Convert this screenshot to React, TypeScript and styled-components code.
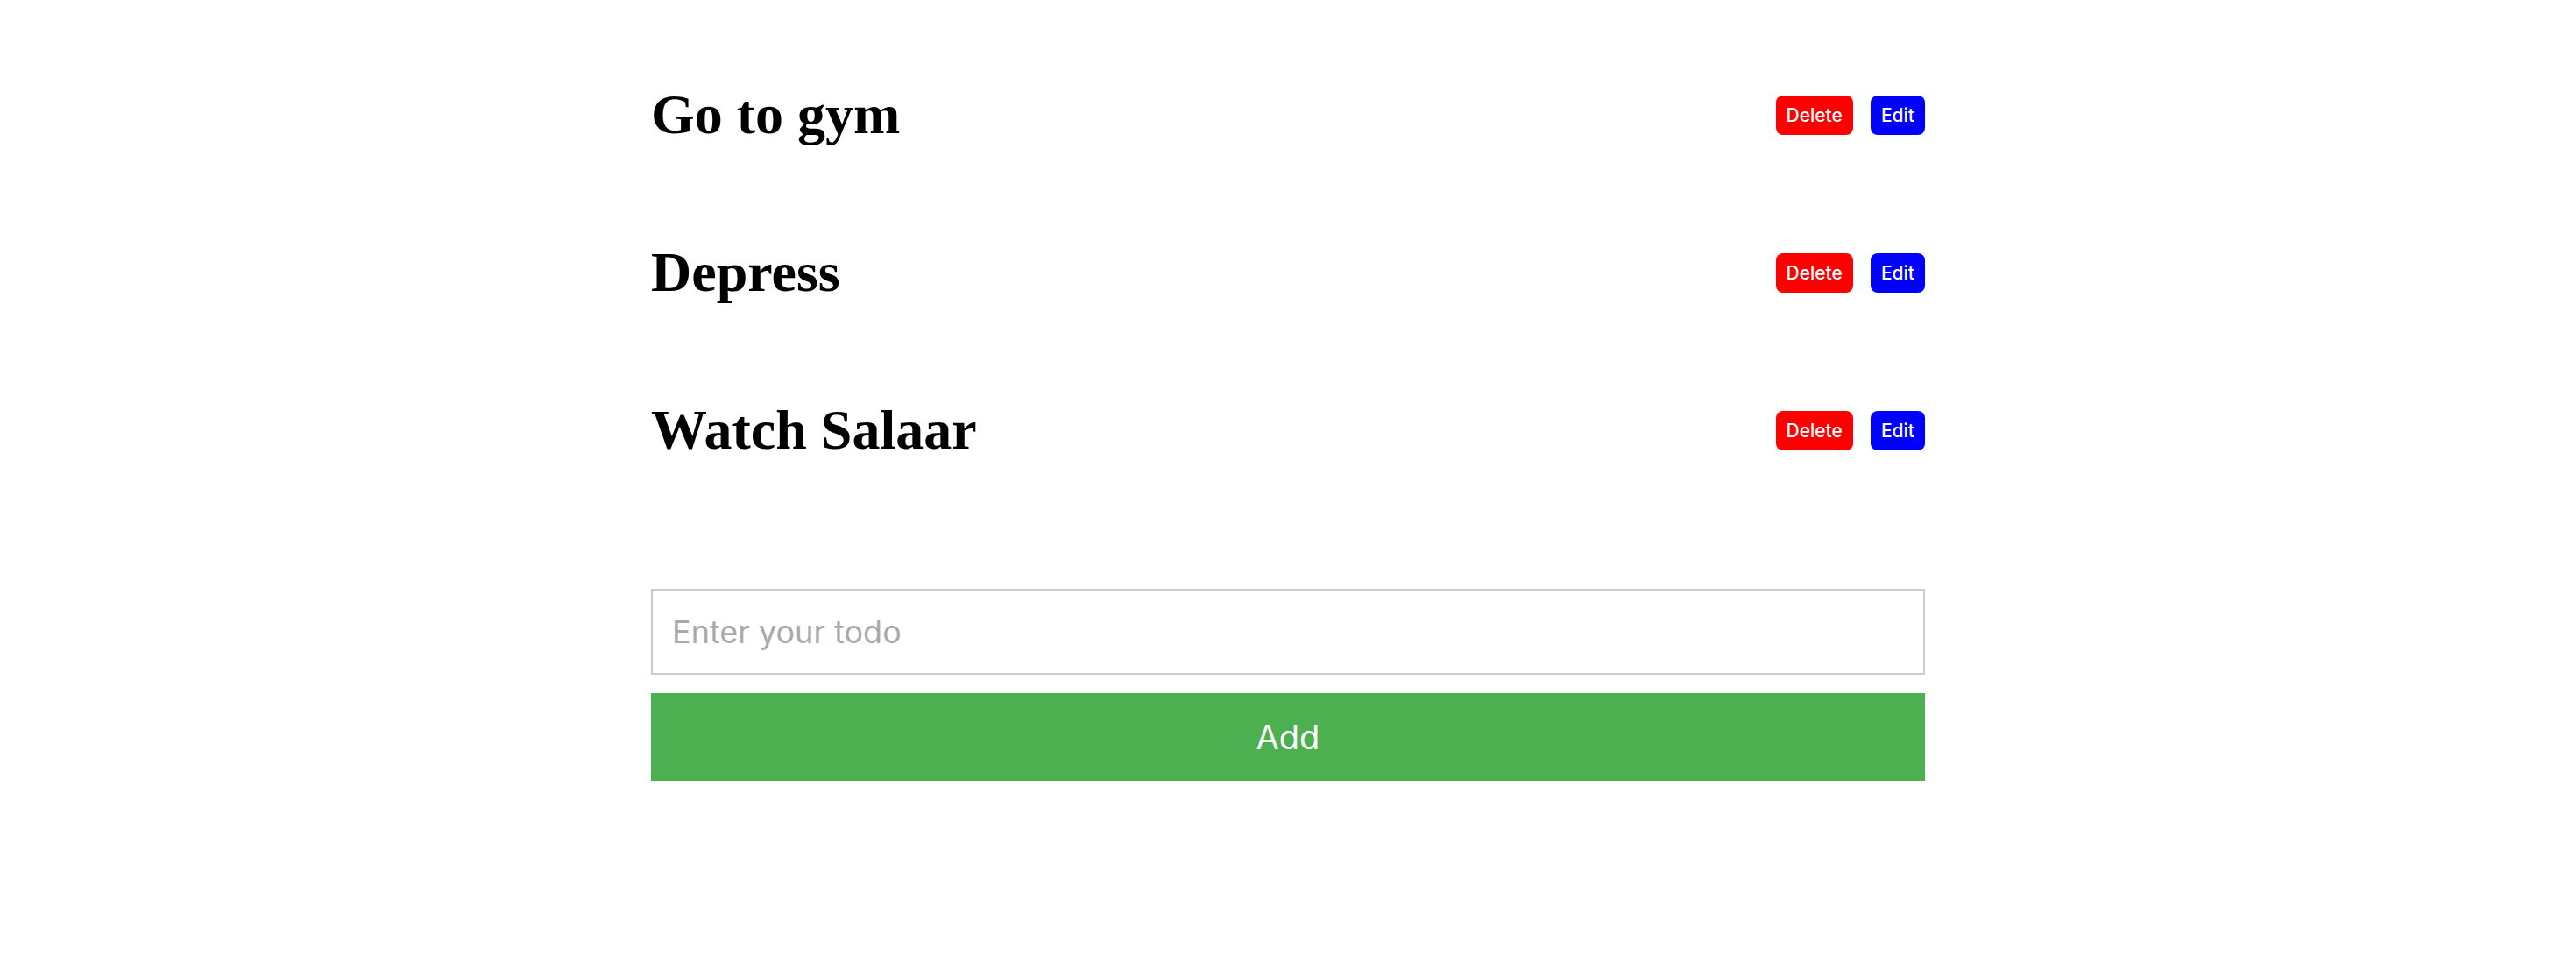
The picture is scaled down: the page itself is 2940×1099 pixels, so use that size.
import React from "react";
import styled, { createGlobalStyle } from "styled-components";

const GlobalStyle = createGlobalStyle`
  html, body {
    margin: 0;
    padding: 0;
    background: #ffffff;
  }
  body {
    font-family: "Liberation Serif", "Times New Roman", serif;
  }
`;

const Page = styled.div`
  width: 1454px;
  margin: 0 auto;
  padding-top: 41px;
  display: flex;
  flex-direction: column;
`;

const List = styled.div`
  display: flex;
  flex-direction: column;
`;

const Row = styled.div`
  height: 180px;
  display: flex;
  align-items: center;
  justify-content: space-between;
`;

const Title = styled.h1`
  margin: 0;
  font-family: "Liberation Serif", "Times New Roman", serif;
  font-weight: 700;
  font-size: 64px;
  color: #000;
`;

const Actions = styled.div`
  display: flex;
  align-items: center;
  gap: 20px;
`;

const SmallButton = styled.button<{ $bg: string }>`
  height: 45px;
  padding: 0 12px;
  border: none;
  border-radius: 8px;
  background: ${(p) => p.$bg};
  color: #fff;
  font-family: Inter, "Liberation Sans", sans-serif;
  font-size: 21px;
  font-weight: 500;
  cursor: pointer;
`;

const Form = styled.div`
  margin-top: 91px;
  display: flex;
  flex-direction: column;
  gap: 21px;
`;

const Input = styled.input`
  box-sizing: border-box;
  width: 100%;
  height: 98px;
  border: 2px solid #cccccc;
  padding: 0 22px;
  font-family: Inter, "Liberation Sans", sans-serif;
  font-size: 36px;
  color: #000;
  outline: none;
  &::placeholder {
    color: #a9a9a9;
  }
`;

const AddButton = styled.button`
  width: 100%;
  height: 100px;
  border: none;
  background: #4caf50;
  color: #fff;
  font-family: Inter, "Liberation Sans", sans-serif;
  font-size: 38px;
  cursor: pointer;
`;

const todos = ["Go to gym", "Depress", "Watch Salaar"];

export default function App() {
  return (
    <>
      <GlobalStyle />
      <Page>
        <List>
          {todos.map((t) => (
            <Row key={t}>
              <Title>{t}</Title>
              <Actions>
                <SmallButton $bg="#ff0000">Delete</SmallButton>
                <SmallButton $bg="#0000ff">Edit</SmallButton>
              </Actions>
            </Row>
          ))}
        </List>
        <Form>
          <Input placeholder="Enter your todo" />
          <AddButton>Add</AddButton>
        </Form>
      </Page>
    </>
  );
}
